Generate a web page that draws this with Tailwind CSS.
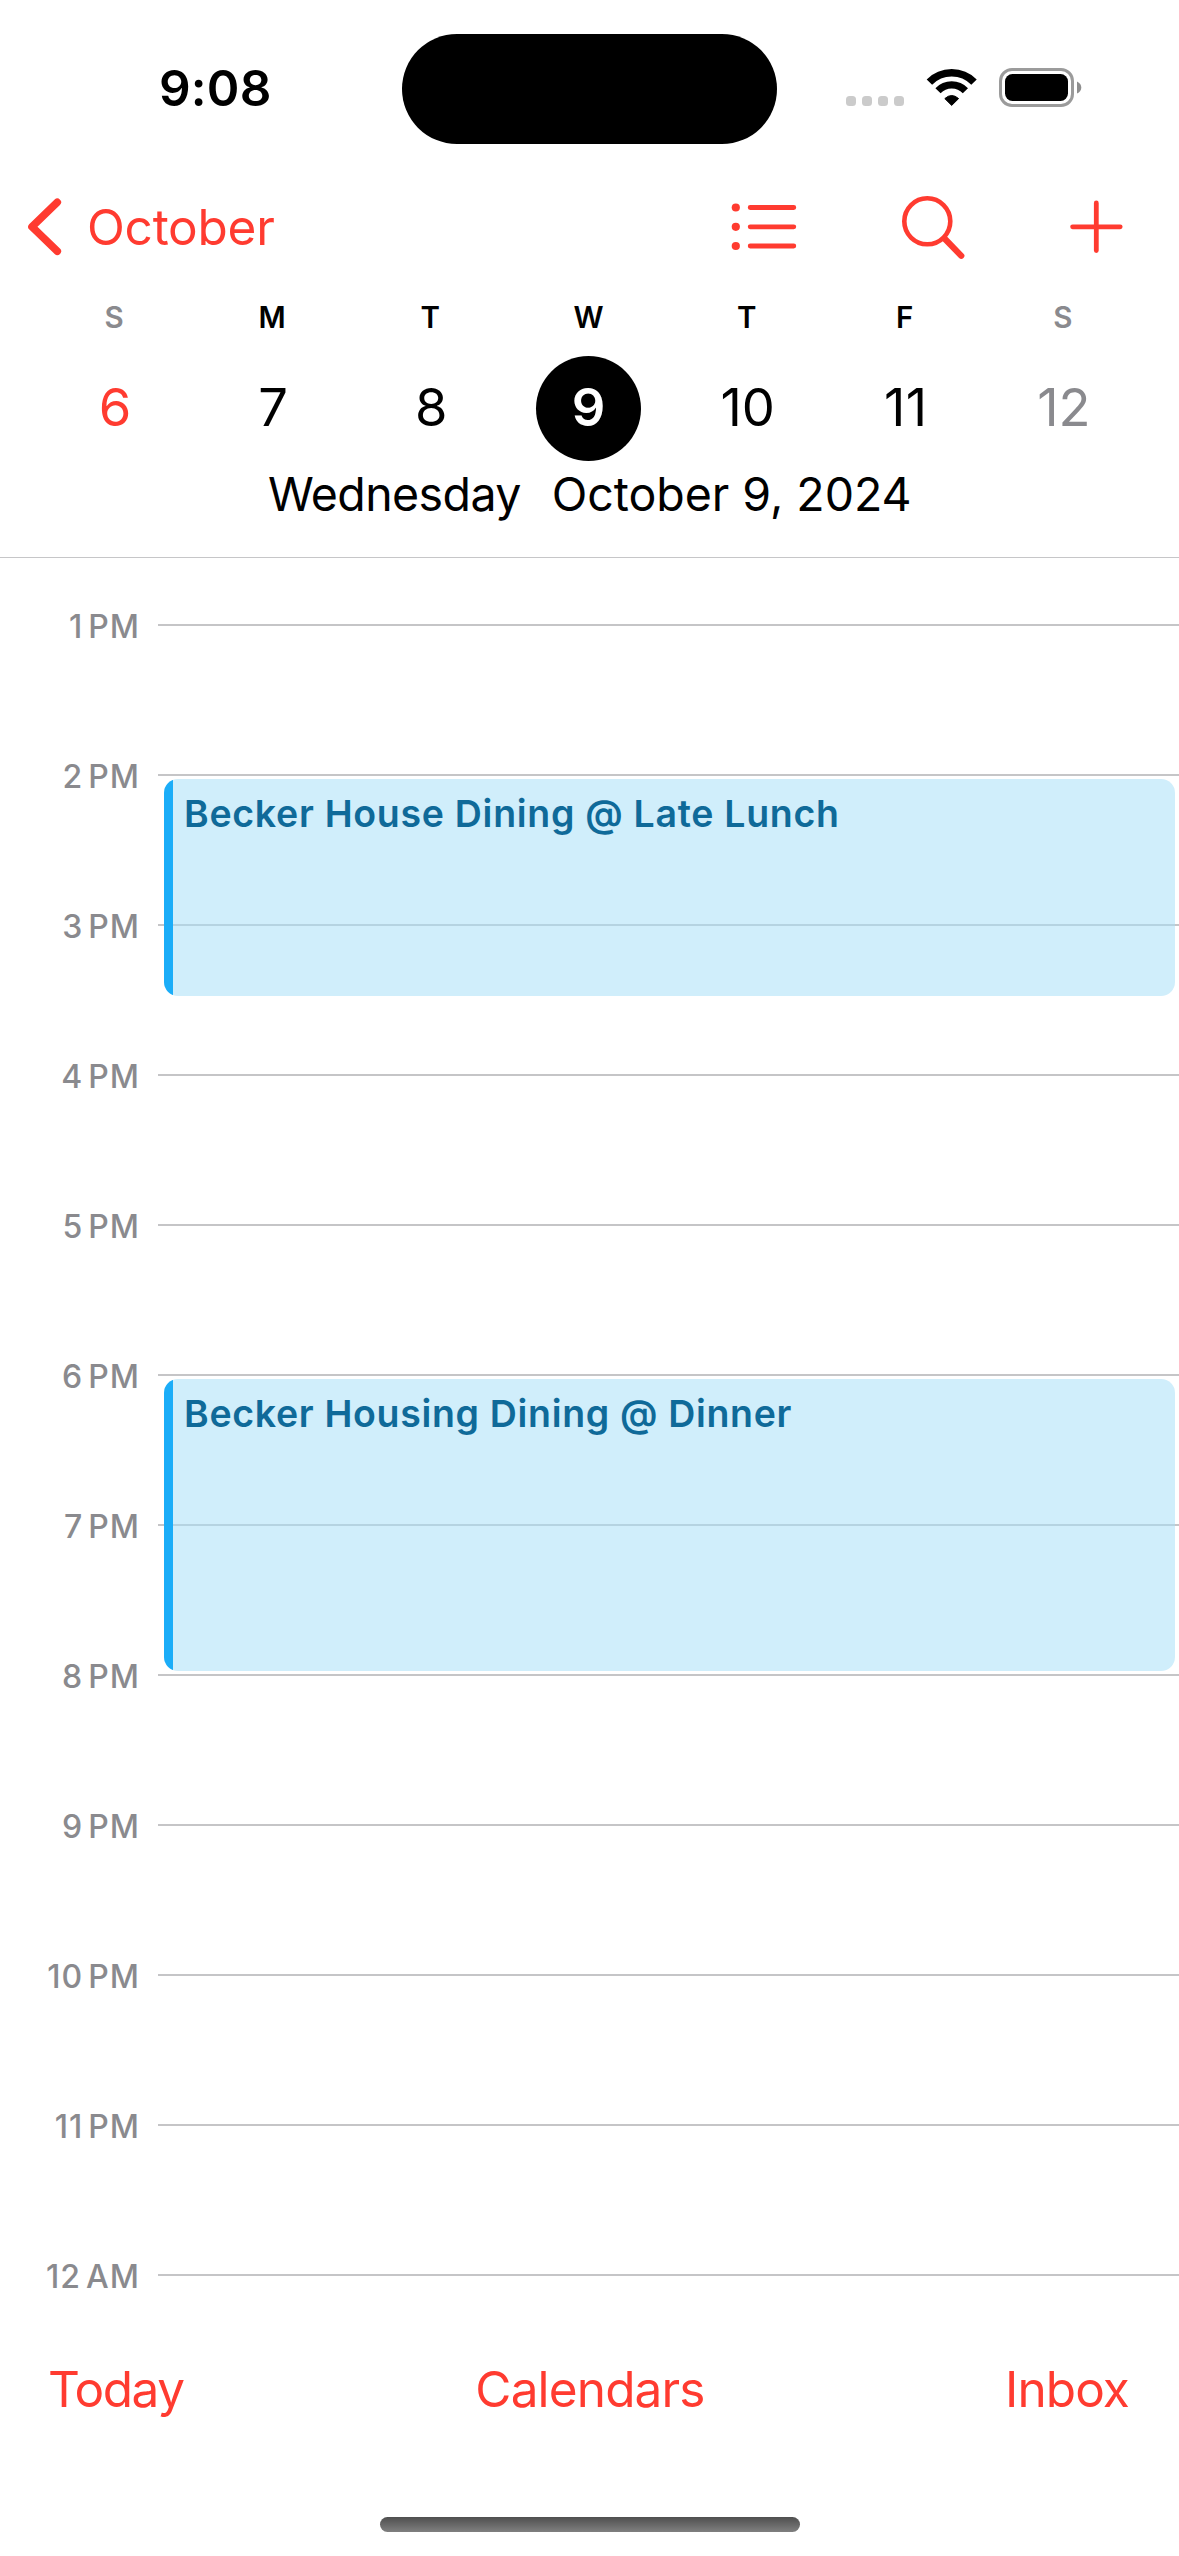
<!DOCTYPE html>
<html lang="en">
<head>
<meta charset="utf-8">
<title>Calendar</title>
<script src="https://cdn.jsdelivr.net/npm/@tailwindcss/browser@4"></script>
</head>
<body class="bg-white text-black font-['Inter',sans-serif]">
<div class="flex h-[2556px] w-[1179px] flex-col overflow-hidden">

  <header class="h-[558px] shrink-0 border-b border-[#c6c6c8]">
    <!-- Status bar -->
    <div class="grid h-[177px] grid-cols-[402px_375px_1fr] items-start pt-[33px]">
      <div class="flex h-[110px] items-center pl-[159px] text-[49.5px] font-semibold tracking-[0.2px]">9:08</div>
      <div class="mt-px h-[110px] rounded-full bg-black"></div>
      <div class="flex h-[109px] items-center pl-[69px]">
        <svg class="h-[39px] w-[58px]" viewBox="846 68 58 39" fill="#cbcbcb">
          <rect x="846" y="96" width="10" height="10" rx="3.5"/>
          <rect x="862" y="96" width="10" height="10" rx="3.5"/>
          <rect x="878" y="96" width="10" height="10" rx="3.5"/>
          <rect x="894" y="96" width="10" height="10" rx="3.5"/>
        </svg>
        <svg class="ml-[22px] h-[39px] w-[52px]" viewBox="926 68 52 39" fill="none" stroke="#000">
          <path d="M929.4 82.1A31.2 31.2 0 0 1 974 82.1" stroke-width="7.6"/>
          <path d="M938 90.7A19 19 0 0 1 965.4 90.7" stroke-width="7.2"/>
          <path d="M944.8 98.6Q951.7 92.4 958.6 98.6L951.7 105.4Z" fill="#000" stroke-width="1" stroke-linejoin="round"/>
        </svg>
        <svg class="ml-[21px] h-[39px] w-[83px]" viewBox="999 68 83 39">
          <rect x="1000.5" y="69.5" width="72" height="36" rx="11.5" fill="none" stroke="#9b9b9b" stroke-width="3"/>
          <rect x="1005" y="74" width="63" height="27" rx="7.5"/>
          <path d="M1077 81.5Q1081.3 83.5 1081.3 87.5Q1081.3 91.5 1077 93.5Z" fill="#8e8e8e"/>
        </svg>
      </div>
    </div>

    <!-- Navigation -->
    <nav class="flex h-[100px] items-center pl-7 pr-[55px] text-[#ff3b30]">
      <svg class="h-[58px] w-[34px]" viewBox="28 198 34 58" fill="none" stroke="currentColor" stroke-width="7.6" stroke-linecap="round" stroke-linejoin="round"><path d="M57.3 202.3L32 226.8L57.3 251.3"/></svg>
      <span class="ml-[25px] text-[49.5px] tracking-[-0.25px]">October</span>
      <svg class="ml-auto h-[66px] w-[66px]" viewBox="731 194 66 66" fill="none" stroke="currentColor" stroke-width="4.8" stroke-linecap="round">
        <path d="M750.2 207.5H793.8M750.2 226.8H793.8M750.2 246H793.8"/>
        <g fill="currentColor" stroke="none"><circle cx="735.8" cy="207.5" r="4.1"/><circle cx="735.8" cy="226.8" r="4.1"/><circle cx="735.8" cy="246" r="4.1"/></g>
      </svg>
      <svg class="ml-[104px] h-[66px] w-[65px]" viewBox="901 194 65 66" fill="none" stroke="currentColor" stroke-linecap="round">
        <circle cx="927.3" cy="221.3" r="23" stroke-width="4.6"/>
        <path d="M944.5 238.5L961.3 255.8" stroke-width="6.2"/>
      </svg>
      <svg class="ml-[103px] h-[66px] w-[55px]" viewBox="1069 194 55 66" fill="none" stroke="currentColor" stroke-width="4.8" stroke-linecap="round"><path d="M1072.6 226.8H1120.2M1096.3 203V250.6"/></svg>
    </nav>

    <!-- Week strip -->
    <div class="grid grid-cols-7 pt-5 pl-[35px] pr-[37px] text-center text-[29.5px] leading-10 font-semibold">
      <span class="text-[#8a8a8e]">S</span><span>M</span><span>T</span><span>W</span><span>T</span><span>F</span><span class="text-[#8a8a8e]">S</span>
    </div>
    <div class="mt-[19px] grid h-[105px] grid-cols-7 items-center justify-items-center pl-[35px] pr-[37px] text-[52.5px] leading-[60px]">
      <span class="pb-[3px] pl-0.5 text-[#ff3b30]">6</span>
      <span class="pb-[3px] pl-0.5">7</span>
      <span class="pb-[3px] pl-0.5">8</span>
      <span class="flex size-[105px] items-center justify-center rounded-full bg-black pb-[3px] font-semibold text-white">9</span>
      <span class="pb-[3px] pl-0.5">10</span>
      <span class="pb-[3px] pl-0.5 tracking-[0.5px]">11</span>
      <span class="pb-[3px] pl-0.5 text-[#8a8a8e]">12</span>
    </div>
    <div class="flex gap-[31px] pl-[268px] text-[46.5px] leading-[66px]">
      <span class="tracking-[-0.6px]">Wednesday</span>
      <span class="tracking-[-0.05px]">October 9, 2024</span>
    </div>
  </header>

  <!-- Day timeline -->
  <main class="relative h-[1752px] shrink-0 overflow-hidden pt-[50px] text-[32px] leading-[38px] font-[550] tracking-[1px] [word-spacing:-4.5px] text-[#8a8a8e]">
    <div class="flex h-[150px] items-start"><span class="w-[140px] text-right">1 PM</span><i class="mt-4 ml-[18px] h-0.5 flex-1 bg-[#c5c5c7]"></i></div>
    <div class="flex h-[150px] items-start"><span class="w-[140px] text-right">2 PM</span><i class="mt-4 ml-[18px] h-0.5 flex-1 bg-[#c5c5c7]"></i></div>
    <div class="flex h-[150px] items-start"><span class="w-[140px] text-right">3 PM</span><i class="mt-4 ml-[18px] h-0.5 flex-1 bg-[#c5c5c7]"></i></div>
    <div class="flex h-[150px] items-start"><span class="w-[140px] text-right">4 PM</span><i class="mt-4 ml-[18px] h-0.5 flex-1 bg-[#c5c5c7]"></i></div>
    <div class="flex h-[150px] items-start"><span class="w-[140px] text-right">5 PM</span><i class="mt-4 ml-[18px] h-0.5 flex-1 bg-[#c5c5c7]"></i></div>
    <div class="flex h-[150px] items-start"><span class="w-[140px] text-right">6 PM</span><i class="mt-4 ml-[18px] h-0.5 flex-1 bg-[#c5c5c7]"></i></div>
    <div class="flex h-[150px] items-start"><span class="w-[140px] text-right">7 PM</span><i class="mt-4 ml-[18px] h-0.5 flex-1 bg-[#c5c5c7]"></i></div>
    <div class="flex h-[150px] items-start"><span class="w-[140px] text-right">8 PM</span><i class="mt-4 ml-[18px] h-0.5 flex-1 bg-[#c5c5c7]"></i></div>
    <div class="flex h-[150px] items-start"><span class="w-[140px] text-right">9 PM</span><i class="mt-4 ml-[18px] h-0.5 flex-1 bg-[#c5c5c7]"></i></div>
    <div class="flex h-[150px] items-start"><span class="w-[140px] text-right">10 PM</span><i class="mt-4 ml-[18px] h-0.5 flex-1 bg-[#c5c5c7]"></i></div>
    <div class="flex h-[150px] items-start"><span class="w-[140px] text-right">11 PM</span><i class="mt-4 ml-[18px] h-0.5 flex-1 bg-[#c5c5c7]"></i></div>
    <div class="flex h-[52px] items-start"><span class="w-[140px] text-right">12 AM</span><i class="mt-4 ml-[18px] h-0.5 flex-1 bg-[#c5c5c7]"></i></div>

    <!-- Events lie over the hour lines -->
    <div class="absolute top-[221px] right-1 left-[164px] flex h-[217px] overflow-hidden rounded-[14px] text-[37.5px] leading-[48px] font-semibold tracking-[0.7px] [word-spacing:0px] text-[#0f6a99]">
      <div class="w-[9px] bg-[#1badf8]"></div>
      <div class="flex-1 bg-[#a6dff8]/53 pt-[11px] pl-[11px]">Becker House Dining @ Late Lunch</div>
    </div>
    <div class="absolute top-[821px] right-1 left-[164px] flex h-[292px] overflow-hidden rounded-[14px] text-[37.5px] leading-[48px] font-semibold tracking-[0.67px] [word-spacing:0px] text-[#0f6a99]">
      <div class="w-[9px] bg-[#1badf8]"></div>
      <div class="flex-1 bg-[#a6dff8]/53 pt-[11px] pl-[11px]">Becker Housing Dining @ Dinner</div>
    </div>
  </main>

  <!-- Toolbar -->
  <footer class="grid grid-cols-3 pl-[49px] pr-[50px] text-[49.5px] leading-[158px] text-[#ff3b30]">
    <span class="-ml-px tracking-[-1.5px]">Today</span>
    <span class="pl-0.5 text-center tracking-[-0.85px]">Calendars</span>
    <span class="text-right tracking-[-0.9px]">Inbox</span>
  </footer>
  <div class="mt-[49px] h-[15px] w-[420px] shrink-0 self-center rounded-full bg-linear-to-b from-[#4f4f4f] to-[#808080]"></div>
</div>
</body>
</html>
